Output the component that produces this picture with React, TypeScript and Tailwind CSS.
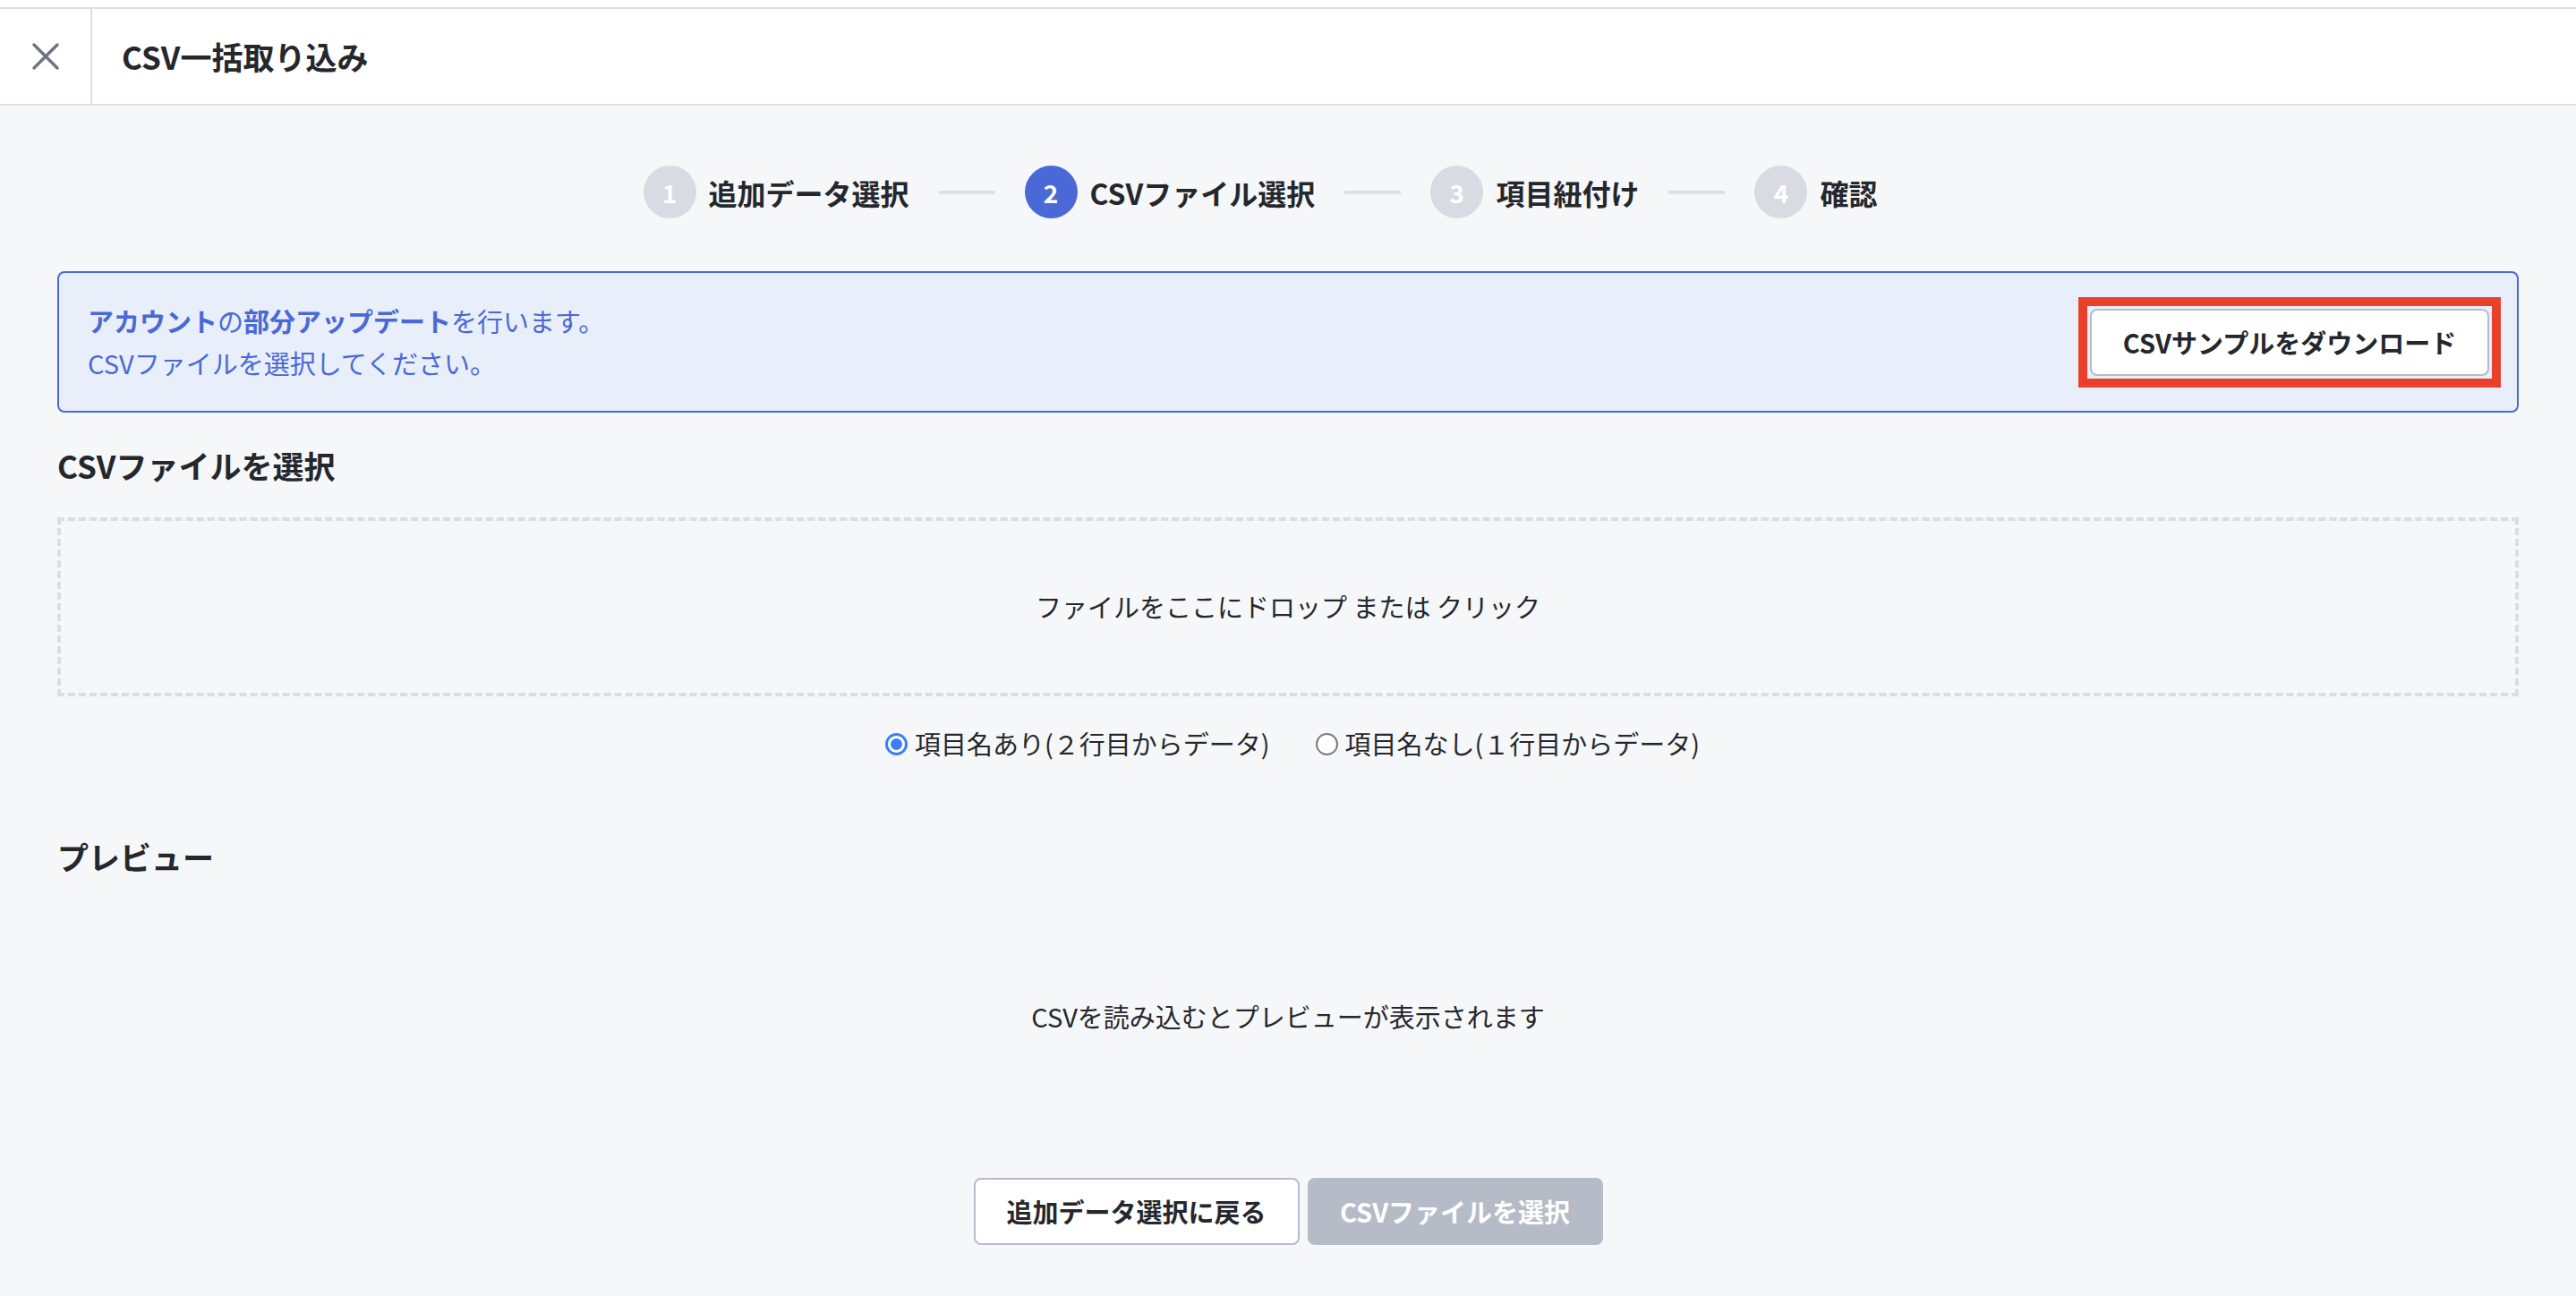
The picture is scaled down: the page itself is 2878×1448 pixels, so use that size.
import React from "react";

const steps = [
	{ num: "1", label: "追加データ選択", active: false },
	{ num: "2", label: "CSVファイル選択", active: true },
	{ num: "3", label: "項目紐付け", active: false },
	{ num: "4", label: "確認", active: false },
];

const Radio = ({ checked, label }: { checked: boolean; label: string }) => {
	return (
		<label className="flex items-center gap-[8px]">
			{checked ? (
				<span className="flex h-[25px] w-[25px] items-center justify-center rounded-full border-[3px] border-[#3b7ff5] bg-white">
					<span className="h-[13px] w-[13px] rounded-full bg-[#3b7ff5]" />
				</span>
			) : (
				<span className="h-[25px] w-[25px] rounded-full border-2 border-[#7a7a7a] bg-white" />
			)}
			<span>{label}</span>
		</label>
	);
};

export default function App() {
	return (
		<div
			className="min-h-screen bg-[#f6f7f9] text-[#25272c]"
			style={{ fontFamily: '"Noto Sans CJK JP", "Noto Sans", sans-serif' }}
		>
			{/* header */}
			<div className="bg-white pt-[8px]">
				<div className="flex h-[110px] items-stretch border-y-2 border-[#dcdfe6]">
					<button className="flex w-[103px] items-center justify-center border-r-2 border-[#dcdfe6]">
						<svg width="32" height="32" viewBox="0 0 32 32" fill="none">
							<path d="M3 3L29 29M29 3L3 29" stroke="#6e7481" strokeWidth="3.5" strokeLinecap="round" />
						</svg>
					</button>
					<div className="flex items-center pl-[33px] text-[35px] font-bold">CSV一括取り込み</div>
				</div>
			</div>

			<div className="px-[64px]">
				{/* stepper */}
				<div className="flex items-center justify-center pr-[62px] pt-[67px]">
					{steps.map((s, i) => (
						<div key={s.num} className="flex items-center">
							{i > 0 && <div className="mx-[33px] h-[4px] w-[63px] bg-[#dcdfe5]" />}
							<div
								className={
									s.active
										? "flex h-[59px] w-[59px] items-center justify-center rounded-full bg-[#4a69d6] text-[28px] font-bold text-white"
										: "flex h-[59px] w-[59px] items-center justify-center rounded-full bg-[#d8dbe2] text-[28px] font-bold text-white"
								}
							>
								{s.num}
							</div>
							<span className="ml-[14px] text-[32px] font-bold">{s.label}</span>
						</div>
					))}
				</div>

				{/* info */}
				<div className="mt-[59px] flex h-[158px] items-center justify-between rounded-[8px] border-2 border-[#4a69d6] bg-[#e8eefa] pl-[32px] pr-[18px] text-[29px] leading-[47px] text-[#4a69d6]">
					<div>
						<p>
							<span className="font-bold">アカウント</span>の<span className="font-bold">部分アップデート</span>
							を行います。
						</p>
						<p>CSVファイルを選択してください。</p>
					</div>
					<div className="border-[10px] border-[#e8402a] p-[3px]">
						<button className="h-[75px] w-[446px] rounded-[8px] border-2 border-[#b5bcc9] bg-white text-[29px] font-bold text-[#25272c]">
							CSVサンプルをダウンロード
						</button>
					</div>
				</div>

				{/* file select */}
				<h2 className="mt-[35px] text-[35px] font-bold leading-[48px]">CSVファイルを選択</h2>
				<div className="mt-[34px] flex h-[200px] items-center justify-center border-4 border-dashed border-[#d9dde5] text-[29px]">
					ファイルをここにドロップ または クリック
				</div>
				<div className="mt-[33px] flex h-[40px] items-center justify-center gap-[51px] pl-[10px] text-[29px]">
					<Radio checked label="項目名あり(２行目からデータ)" />
					<Radio checked={false} label="項目名なし(１行目からデータ)" />
				</div>

				{/* preview */}
				<h2 className="mt-[82px] text-[35px] font-bold leading-[48px]">プレビュー</h2>
				<p className="mt-[134px] text-center text-[29px] leading-[40px]">CSVを読み込むとプレビューが表示されます</p>

				{/* actions */}
				<div className="mt-[161px] flex justify-center gap-[9px] pb-[56px]">
					<button className="h-[75px] w-[364px] rounded-[8px] border-2 border-[#b5bcc9] bg-white text-[29px] font-bold">
						追加データ選択に戻る
					</button>
					<button className="h-[75px] w-[330px] rounded-[8px] bg-[#b5bbc7] text-[29px] font-bold text-white">
						CSVファイルを選択
					</button>
				</div>
			</div>
		</div>
	);
}
